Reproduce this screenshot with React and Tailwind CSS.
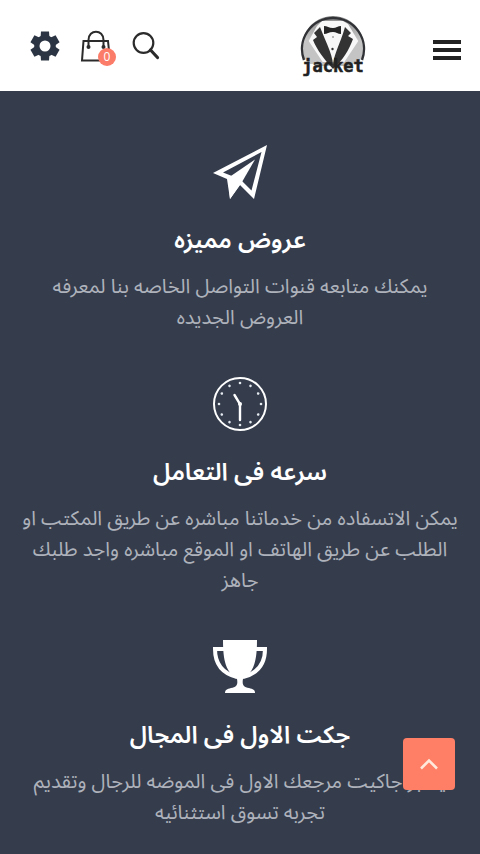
import React from 'react';

const features = [
  {
    title: 'عروض مميزه',
    text: 'يمكنك متابعه قنوات التواصل الخاصه بنا لمعرفه العروض الجديده',
    icon: PlaneIcon,
  },
  {
    title: 'سرعه فى التعامل',
    text: 'يمكن الاتسفاده من خدماتنا مباشره عن طريق المكتب او الطلب عن طريق الهاتف او الموقع مباشره واجد طلبك جاهز',
    icon: ClockIcon,
  },
  {
    title: 'جكت الاول فى المجال',
    text: 'يعتبر جاكيت مرجعك الاول فى الموضه للرجال وتقديم تجربه تسوق استثنائيه',
    icon: TrophyIcon,
  },
];

function PlaneIcon() {
  return (
    <svg viewBox="0 0 54 54" className="h-[54px] w-[54px]" fill="#fff" aria-hidden="true">
      <path
        fillRule="evenodd"
        d="M54 0 L41 54 L27 40 L17 54 L14 34 L0 28 Z M48.5 7 L10 27.5 L19 31 L29 36 L38.5 45.5 Z"
      />
      <path d="M42 14.5 L15 33 L17 54 L29 37 Z" />
    </svg>
  );
}

function ClockIcon() {
  const dots = [0, 30, 60, 90, 120, 150, 180, 210, 240, 270, 300, 330];
  return (
    <svg viewBox="0 0 54 54" className="h-[54px] w-[54px]" fill="none" stroke="#fff" aria-hidden="true">
      <circle cx="27" cy="27" r="26" strokeWidth="2" />
      {dots.map((deg) => (
        <circle key={deg} cx="27" cy="6" r="1.3" fill="#e5eaf0" stroke="none" transform={`rotate(${deg} 27 27)`} />
      ))}
      <path d="M21.5 18 L27 27 V43" strokeWidth="2.4" strokeLinecap="round" />
      <circle cx="27" cy="27" r="2" fill="#fff" stroke="none" />
    </svg>
  );
}

function TrophyIcon() {
  return (
    <svg viewBox="0 0 54 54" className="h-[54px] w-[54px]" fill="#fff" aria-hidden="true">
      <path d="M10 0 H44 C44 21 41 32 30 39 C29 44 30 47 36 48 C40 49 42 50 42 53 H12 C12 50 14 49 18 48 C24 47 25 44 24 39 C13 32 10 21 10 0 Z" />
      <path d="M11 9 H2 C2 22 8 33 24 37 M43 9 H52 C52 22 46 33 30 37" fill="none" stroke="#fff" strokeWidth="4" />
    </svg>
  );
}

function GearIcon() {
  return (
    <svg viewBox="0 0 30 30" className="h-[30px] w-[30px]" aria-hidden="true">
      <g fill="#2b3443">
        <circle cx="15" cy="15" r="10.8" />
        {[0, 60, 120, 180, 240, 300].map((deg) => (
          <path key={deg} d="M11 0.5 H19 L19.5 7 H10.5 Z" transform={`rotate(${deg} 15 15)`} />
        ))}
      </g>
      <circle cx="15" cy="15" r="5.5" fill="#fff" />
    </svg>
  );
}

function BagIcon() {
  return (
    <svg viewBox="0 0 32 32" className="h-8 w-8" fill="none" stroke="#2b2b2b" strokeWidth="2" aria-hidden="true">
      <path d="M3.5 11 H28 L30 30.5 H2 Z" />
      <path d="M8.5 17 V10 C8.5 -1 23.5 -1 23.5 10 V17" />
      <circle cx="8.5" cy="17" r="2" fill="#2b2b2b" stroke="none" />
      <circle cx="23.5" cy="17" r="2" fill="#2b2b2b" stroke="none" />
    </svg>
  );
}

function SearchIcon() {
  return (
    <svg viewBox="0 0 28 28" className="h-7 w-7" fill="none" stroke="#2b2b2b" aria-hidden="true">
      <circle cx="11.5" cy="11" r="9.8" strokeWidth="2.2" />
      <path d="M18.5 18 L25.5 25.5" strokeWidth="3.2" strokeLinecap="round" />
    </svg>
  );
}

function Logo() {
  return (
    <svg viewBox="0 2 66 64" className="h-16 w-[66px]" role="img" aria-label="jacket">
      <defs>
        <linearGradient id="disc" x1="0" y1="0" x2="0" y2="1">
          <stop offset="0" stopColor="#8a8a8a" />
          <stop offset="0.5" stopColor="#c9c9c9" />
          <stop offset="1" stopColor="#b5b5b5" />
        </linearGradient>
      </defs>
      <path d="M4 46 A31 31 0 1 1 62 46 L50 54 H16 Z" fill="url(#disc)" />
      <path d="M22 9 L43 9 L48 12 L60 32 L46 50 H21 L7 32 L17 14 Z" fill="#f8f8f8" />
      <path d="M6 25 L24 52 H10 L4 46 Z M61 25 L43 52 H56 L62 46 Z" fill="#c4c4c4" />
      <path d="M4 48 A31 31 0 1 1 62 48" fill="none" stroke="#303236" strokeWidth="2.4" />
      <path d="M20 15 L14 21 L17 25 L13 28 C17 38 24 47 33 57 C34 45 27 33 20 15 Z" fill="#333" />
      <path d="M45 15 L51 21 L48 24 L53 27 C49 38 43 48 33 57 C32 45 40 33 45 15 Z" fill="#333" />
      <path d="M24 14 C27 14 29 16 33 16 C36 16 38 14 41 14 V22 C38 22 36 20 33 20 C29 20 27 22 24 22 Z" fill="#252525" />
      <circle cx="33" cy="25" r="0.8" fill="#666" />
      <circle cx="32.5" cy="37" r="1.2" fill="#333" />
      <text
        x="33"
        y="60"
        textAnchor="middle"
        fontFamily="DejaVu Sans Mono, monospace"
        fontWeight="bold"
        fontSize="17"
        fill="#222"
        stroke="#222"
        strokeWidth="0.5"
      >
        jacket
      </text>
    </svg>
  );
}

function Header() {
  return (
    <header className="flex h-[91px] items-center justify-between bg-white pr-[19px] pl-[30px]">
      <div className="flex items-center gap-[67px]">
        <button type="button" aria-label="القائمة" className="mt-2 flex w-7 flex-col gap-1">
          <span className="h-1 w-full bg-[#222]" />
          <span className="h-1 w-full bg-[#222]" />
          <span className="h-1 w-full bg-[#222]" />
        </button>
        <a href="#home">
          <Logo />
        </a>
      </div>

      <div className="flex items-center gap-5">
        <button type="button" aria-label="بحث">
          <SearchIcon />
        </button>
        <a href="#cart" aria-label="السلة" className="relative">
          <BagIcon />
          <span className="absolute -right-1 -bottom-1 h-[18px] w-[18px] rounded-full bg-[#fb7c69] text-center font-['Open_Sans',sans-serif] text-xs leading-[18px] text-white">
            0
          </span>
        </a>
        <button type="button" aria-label="الإعدادات">
          <GearIcon />
        </button>
      </div>
    </header>
  );
}

function Feature({ title, text, icon: Icon }) {
  return (
    <div className="flex flex-col items-center text-center">
      <Icon />
      <h3 className="mt-6 text-2xl leading-8 font-semibold text-white">{title}</h3>
      <p className="mt-[15px] text-[20px] leading-[31px] text-[#aeb2bb]">{text}</p>
    </div>
  );
}

export default function App() {
  return (
    <div dir="rtl" className="min-h-screen bg-[#353d4d] font-['Noto_Sans','Noto_Sans_Arabic',sans-serif]">
      <Header />

      <main className="flex flex-col gap-[45px] px-5 pt-[54px] pb-6">
        {features.map((f) => (
          <Feature key={f.title} {...f} />
        ))}
      </main>

      <button
        type="button"
        aria-label="إلى الأعلى"
        className="fixed right-[25px] bottom-16 flex h-[52px] w-[52px] items-center justify-center rounded bg-[#ff7f66]"
      >
        <svg viewBox="0 0 18 12" className="h-3 w-[18px]" fill="none" stroke="#ffe9dc" strokeWidth="2.5" aria-hidden="true">
          <path d="M1 10.5 L9 2.5 L17 10.5" />
        </svg>
      </button>
    </div>
  );
}
